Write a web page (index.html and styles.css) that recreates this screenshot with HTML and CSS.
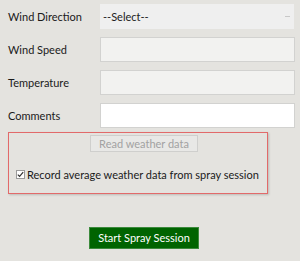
FILE: index.html
```html
<!DOCTYPE html>
<html>
<head>
<meta charset="utf-8">
<link rel="stylesheet" href="styles.css">
</head>
<body>
<div class="form">
  <div class="row">
    <label class="lbl">Wind Direction</label>
    <div class="select"><span>--Select--</span><span class="arrow"></span></div>
  </div>
  <div class="row">
    <label class="lbl">Wind Speed</label>
    <div class="input disabled"></div>
  </div>
  <div class="row">
    <label class="lbl">Temperature</label>
    <div class="input disabled"></div>
  </div>
  <div class="row">
    <label class="lbl">Comments</label>
    <div class="input"></div>
  </div>
</div>
<div class="box">
  <div class="read-btn">Read weather data</div>
  <div class="check-row">
    <span class="checkbox"><svg width="7" height="7" viewBox="0 0 7 7"><path d="M0.8 3.6 L2.6 5.4 L6.2 1.2" fill="none" stroke="#333" stroke-width="1.2"/></svg></span>
    <span class="check-text">Record average weather data from spray session</span>
  </div>
</div>
<div class="start-wrap">
  <div class="start-btn">Start Spray Session</div>
</div>
</body>
</html>
```
FILE: styles.css
```css
html, body {
  margin: 0;
  padding: 0;
  background: #e4e3df;
  font-family: Lato, "Liberation Sans", sans-serif;
  font-size: 11px;
  color: #1a1a1a;
}
.form {
  padding: 4px 5px 0 8px;
  display: flex;
  flex-direction: column;
  gap: 8px;
}
.row {
  display: flex;
  align-items: center;
  height: 25px;
}
.lbl {
  width: 92px;
  flex: none;
}
.select {
  width: 194px;
  height: 25px;
  box-sizing: border-box;
  background: #efefef;
  display: flex;
  align-items: center;
  justify-content: space-between;
  padding: 0 4px 0 3px;
  color: #222;
}
.arrow {
  width: 5px;
  height: 3px;
  border-top: 1px solid #c8c8c8;
  margin-top: 2px;
}
.input {
  width: 195px;
  height: 25px;
  box-sizing: border-box;
  border: 1px solid #d2d2d0;
  background: #ffffff;
}
.input.disabled {
  background: #f2f2f0;
}
.box {
  margin: 4px 0 0 8px;
  width: 260px;
  height: 62px;
  box-sizing: border-box;
  border: 1px solid #e26a6a;
  box-shadow: 1px 1px 2px rgba(0,0,0,0.18);
  display: flex;
  flex-direction: column;
}
.read-btn {
  margin: 2px 0 0 81px;
  width: 108px;
  height: 17px;
  box-sizing: border-box;
  border: 1px solid #cfcfcd;
  background: #e8e8e6;
  color: #a2a2a2;
  font-size: 11px;
  line-height: 15px;
  text-align: center;
}
.check-row {
  display: flex;
  align-items: center;
  margin: 16px 0 0 7px;
}
.checkbox {
  width: 7px;
  height: 7px;
  border: 1px solid #9a9a9a;
  background: #fff;
  display: flex;
  margin-right: 2px;
}
.check-text {
  font-size: 11px;
}
.start-wrap {
  padding: 33px 0 0 89px;
}
.start-btn {
  width: 110px;
  height: 22px;
  box-sizing: border-box;
  background: #006400;
  border: 1px solid #3c8a3c;
  color: #fff;
  line-height: 20px;
  text-align: center;
  font-size: 11px;
}
```
